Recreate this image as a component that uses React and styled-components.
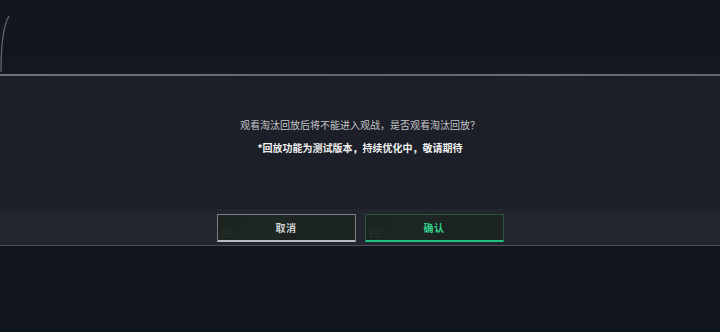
import React from 'react';
import styled, { createGlobalStyle } from 'styled-components';

const GlobalStyle = createGlobalStyle`
  html, body {
    margin: 0;
    padding: 0;
    background: #11151e;
  }
  body {
    font-family: "Noto Sans CJK SC", "Noto Sans", sans-serif;
  }
`;

const Page = styled.div`
  width: 720px;
  height: 332px;
  display: flex;
  flex-direction: column;
  background: #11151e;
  overflow: hidden;
`;

const TopArea = styled.div`
  position: relative;
  height: 74px;
  flex-shrink: 0;
  background: linear-gradient(180deg, #121620 0%, #121620 80%, #151b22 100%);
`;

const Arc = styled.svg`
  position: absolute;
  left: 0;
  top: 0;
`;

const TopLine = styled.div`
  height: 2px;
  flex-shrink: 0;
  background: linear-gradient(90deg, #6e747b 0%, #62676e 50%, #64706f 75%, #62676d 100%);
`;

const Dialog = styled.div`
  display: flex;
  flex-direction: column;
  background: #1c1f27;
  flex-shrink: 0;
`;

const Message = styled.div`
  height: 133px;
  box-sizing: border-box;
  padding-top: 42px;
  display: flex;
  flex-direction: column;
  align-items: center;
  gap: 9px;
`;

const Line = styled.p`
  margin: 0;
  font-size: 10px;
  line-height: 14px;
  color: ${(p) => (p.$strong ? '#f2f2f2' : '#c4c6c9')};
  font-weight: ${(p) => (p.$strong ? 700 : 400)};
  white-space: nowrap;
`;

const Footer = styled.div`
  height: 37px;
  box-sizing: border-box;
  padding-top: 5px;
  background: #22252d;
  border-bottom: 1px solid #4b4f56;
  display: flex;
  justify-content: center;
  gap: 9px;
`;

const Button = styled.button`
  position: relative;
  width: 139px;
  height: 28px;
  box-sizing: border-box;
  padding: 0;
  font-family: inherit;
  font-size: 10px;
  font-weight: 700;
  cursor: pointer;
  background: linear-gradient(120deg, #1b2420 0%, #1e2723 45%, #1a2320 55%, #1c2522 100%);
  border: 1px solid ${(p) => (p.$primary ? '#2c5443' : '#7c8086')};
  border-bottom: 2px solid ${(p) => (p.$primary ? '#1fc27c' : '#b6b9bd')};
  color: ${(p) => (p.$primary ? '#34d08b' : '#cfd1d4')};
  letter-spacing: 0.5px;
`;

const Mark = styled.span`
  position: absolute;
  left: 4px;
  bottom: 2px;
  width: 10px;
  height: 8px;
  border-left: 1px solid rgba(255, 255, 255, 0.05);
  background: repeating-linear-gradient(180deg, rgba(255,255,255,0.04) 0 1px, transparent 1px 3px);
`;

const Rest = styled.div`
  flex: 1;
  background: #11151e;
`;

export default function App() {
  return (
    <Page>
      <GlobalStyle />
      <TopArea>
        <Arc width="20" height="74" viewBox="0 0 20 74">
          <path d="M9 16 C4 24 1 40 1 72" stroke="#666b72" strokeWidth="1.2" fill="none" />
        </Arc>
      </TopArea>
      <TopLine />
      <Dialog>
        <Message>
          <Line>观看淘汰回放后将不能进入观战，是否观看淘汰回放？</Line>
          <Line $strong>*回放功能为测试版本，持续优化中，敬请期待</Line>
        </Message>
        <Footer>
          <Button type="button">
            <Mark />
            取消
          </Button>
          <Button type="button" $primary>
            <Mark />
            确认
          </Button>
        </Footer>
      </Dialog>
      <Rest />
    </Page>
  );
}
